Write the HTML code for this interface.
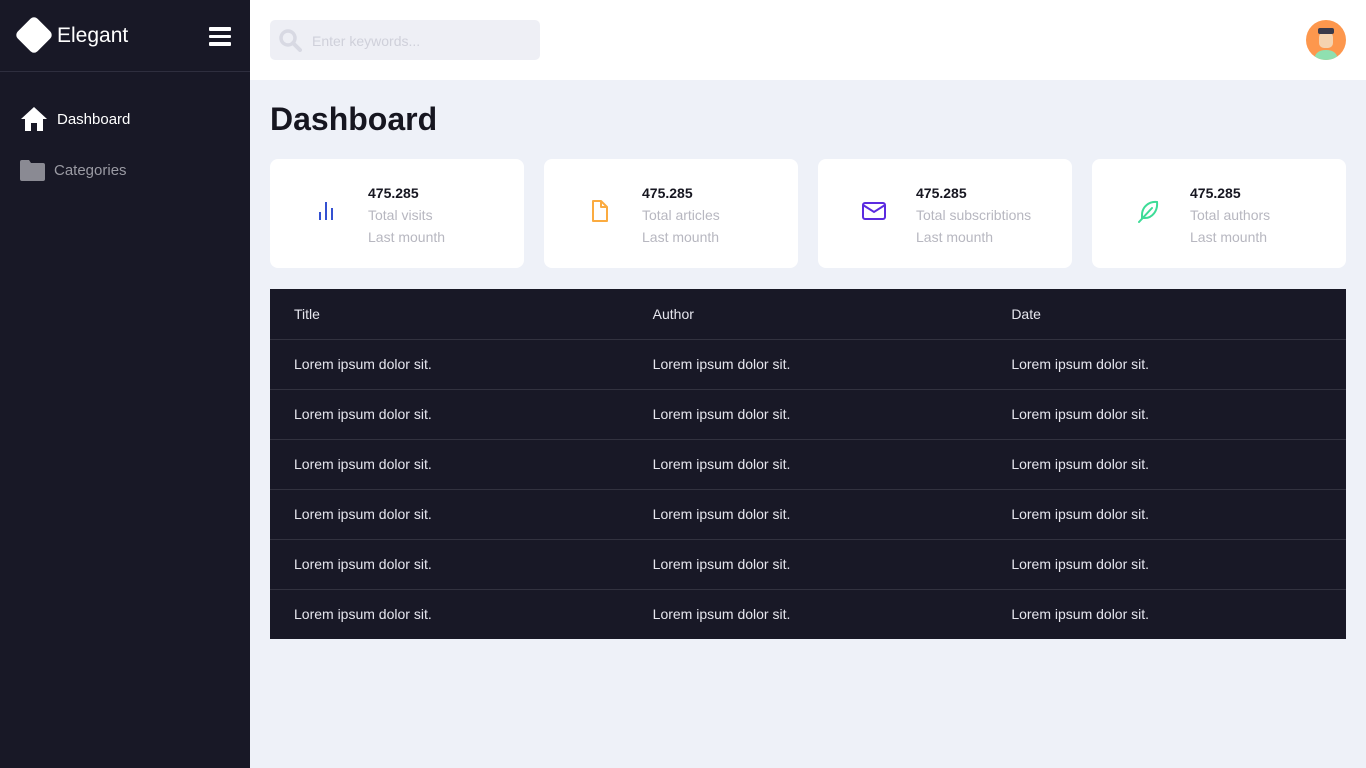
<!DOCTYPE html>
<html><head><style>
*{margin:0;padding:0;box-sizing:border-box}
body{width:1366px;height:768px;background:#eef1f8;font-family:"Liberation Sans",sans-serif;position:relative;overflow:hidden}
.side{position:absolute;left:0;top:0;width:250px;height:768px;background:#181826}
.logo{height:72px;border-bottom:1px solid #2e2e3e;position:relative}
.dia{position:absolute;left:20px;top:21px;width:28px;height:28px;background:#fff;border-radius:5px;transform:rotate(45deg)}
.logo .t{position:absolute;left:57px;top:24px;color:#fff;font-size:21px}
.burg{position:absolute;left:209px;top:27px;width:22px}
.burg i{display:block;height:3.5px;background:#fff;margin-bottom:4px;border-radius:1px}
.nav{position:absolute;left:20px;font-size:15px}
.top{position:absolute;left:250px;top:0;right:0;height:80px;background:#fff}
.search{position:absolute;left:20px;top:20px;width:270px;height:40px;background:#eeeff5;border-radius:5px;color:#cfd0da;font-size:14px;padding:13px 0 0 42px}
.av{position:absolute;right:20px;top:20px;width:40px;height:40px;border-radius:50%;background:#fd974d;overflow:hidden}
h1{position:absolute;left:270px;top:101px;font-size:32px;font-weight:bold;color:#161620}
.card{position:absolute;top:159px;width:254px;height:109px;background:#fff;border-radius:8px}
.card .ic{position:absolute;left:44px;top:40px}
.card .n{position:absolute;left:98px;top:26px;font-size:14px;font-weight:bold;color:#161620}
.card .l{position:absolute;left:98px;top:45px;font-size:14px;color:#b7b7c0;line-height:22px}
table{position:absolute;left:270px;top:289px;width:1076px;border-collapse:collapse;background:#181826;color:#e6e6ee;font-size:14px}
td{height:50px;padding-left:24px;border-bottom:1px solid #32323f;width:359px}
tr:last-child td{border-bottom:none}
</style></head><body>
<div class="side">
<div class="logo"><div class="dia"></div><div class="t">Elegant</div><div class="burg"><i></i><i></i><i></i></div></div>
<div class="nav" style="top:106px"><svg width="28" height="26" viewBox="0 0 28 26" style="position:absolute;left:0;top:0"><path d="M14 1 L1 13 H5 V25 H11 V17 H17 V25 H23 V13 H27 Z" fill="#fff"/></svg><span style="position:absolute;left:37px;top:5px;color:#fff;white-space:nowrap">Dashboard</span></div>
<div class="nav" style="top:159px"><svg width="25" height="22" viewBox="0 0 25 22" style="position:absolute;left:0;top:0"><path d="M0 3 Q0 1 2 1 H9 L11 4 H23 Q25 4 25 6 V20 Q25 22 23 22 H2 Q0 22 0 20 Z" fill="#8a8a93"/></svg><span style="position:absolute;left:34px;top:3px;color:#9a9aa3;white-space:nowrap">Categories</span></div>
</div>
<div class="top"><div class="search"><svg width="24" height="24" viewBox="0 0 24 24" style="position:absolute;left:8px;top:8px"><circle cx="10" cy="10" r="7" stroke="#d8d9e3" stroke-width="3.5" fill="none"/><path d="M15 15 L22 22" stroke="#d8d9e3" stroke-width="4" stroke-linecap="round"/></svg>Enter keywords...</div>
<div class="av"><svg width="40" height="40" viewBox="0 0 40 40"><path d="M8 40 Q9 30 20 30 Q31 30 32 40Z" fill="#8fe0b0"/><rect x="13" y="12" width="14" height="16" rx="5" fill="#f5d3b0"/><rect x="12" y="8" width="16" height="6" rx="2" fill="#3a3a4a"/></svg></div></div>
<h1>Dashboard</h1>
<div class="card" style="left:270px"><svg class="ic" width="24" height="24" viewBox="0 0 24 24"><path d="M6 21V13M12 21V3M18 21V9" stroke="#3451d1" stroke-width="2"/></svg><div class="n">475.285</div><div class="l">Total visits<br>Last mounth</div></div>
<div class="card" style="left:544px"><svg class="ic" width="24" height="24" viewBox="0 0 24 24"><path d="M5 2H13L19 8V22H5Z M13 2V8H19" stroke="#fbab40" stroke-width="2" fill="none" stroke-linejoin="round"/></svg><div class="n">475.285</div><div class="l">Total articles<br>Last mounth</div></div>
<div class="card" style="left:818px"><svg class="ic" width="24" height="24" viewBox="0 0 24 24"><rect x="1" y="4" width="22" height="16" rx="2" stroke="#5b2be0" stroke-width="2" fill="none"/><path d="M1 6L12 13L23 6" stroke="#5b2be0" stroke-width="2" fill="none"/></svg><div class="n">475.285</div><div class="l">Total subscribtions<br>Last mounth</div></div>
<div class="card" style="left:1092px"><svg class="ic" width="24" height="24" viewBox="0 0 24 24"><path d="M21 3C13 2 6 8 6 16V19H9C16 19 22 12 21 3Z M3 23L16 9" stroke="#3ddc97" stroke-width="2" fill="none" stroke-linecap="round"/></svg><div class="n">475.285</div><div class="l">Total authors<br>Last mounth</div></div>
<table>
<tr><td>Title</td><td>Author</td><td>Date</td></tr>
<tr><td>Lorem ipsum dolor sit.</td><td>Lorem ipsum dolor sit.</td><td>Lorem ipsum dolor sit.</td></tr>
<tr><td>Lorem ipsum dolor sit.</td><td>Lorem ipsum dolor sit.</td><td>Lorem ipsum dolor sit.</td></tr>
<tr><td>Lorem ipsum dolor sit.</td><td>Lorem ipsum dolor sit.</td><td>Lorem ipsum dolor sit.</td></tr>
<tr><td>Lorem ipsum dolor sit.</td><td>Lorem ipsum dolor sit.</td><td>Lorem ipsum dolor sit.</td></tr>
<tr><td>Lorem ipsum dolor sit.</td><td>Lorem ipsum dolor sit.</td><td>Lorem ipsum dolor sit.</td></tr>
<tr><td>Lorem ipsum dolor sit.</td><td>Lorem ipsum dolor sit.</td><td>Lorem ipsum dolor sit.</td></tr>
</table>
</body></html>
